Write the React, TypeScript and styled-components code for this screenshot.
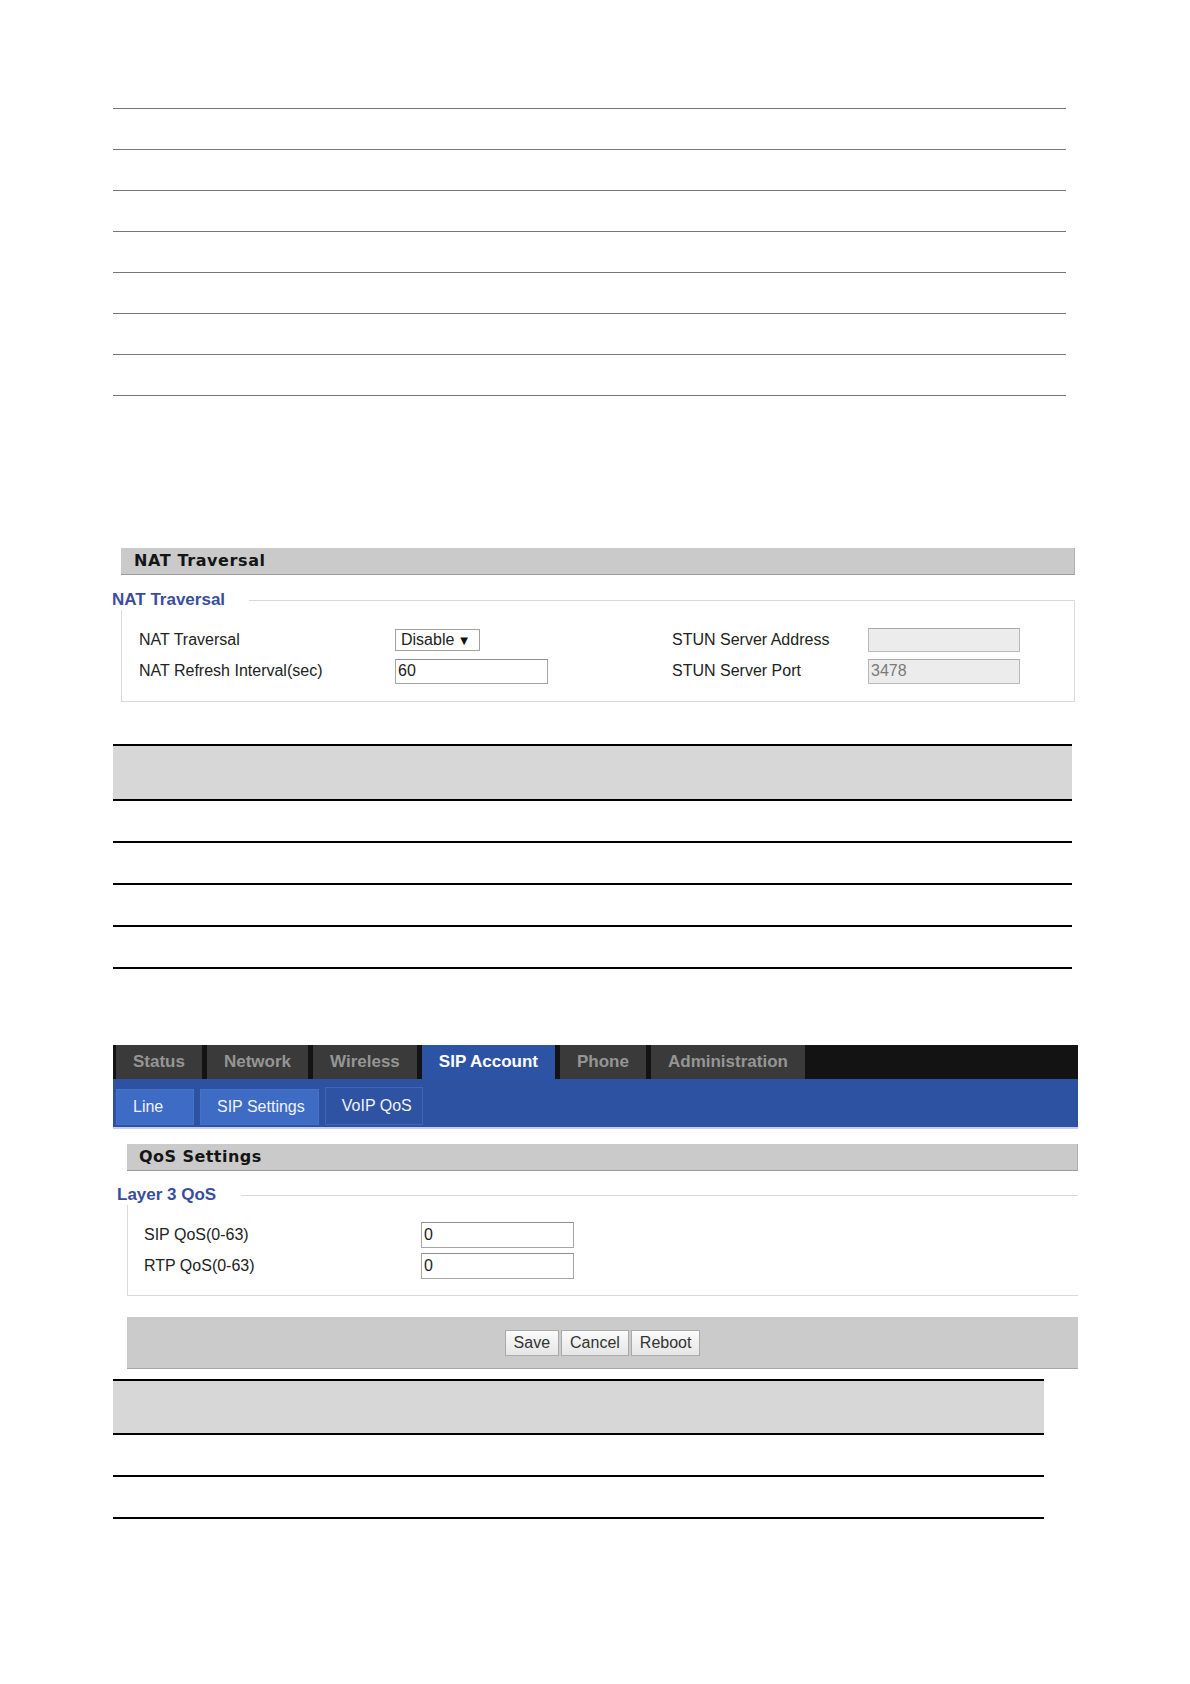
import React from "react";
import styled, { createGlobalStyle } from "styled-components";

const GlobalStyle = createGlobalStyle`
  html, body { margin: 0; padding: 0; background: #ffffff; }
  body { font-family: "Liberation Sans", Arial, sans-serif; color: #222; }
  * { box-sizing: border-box; }
`;

const Page = styled.div`
  width: 1190px;
  min-height: 1684px;
  padding: 108px 0 0 113px;
  display: flex;
  flex-direction: column;
`;

const RuleList = styled.div`
  display: flex;
  flex-direction: column;
  gap: 40px;
`;

const Rule = styled.div`
  width: 953px;
  height: 1px;
  background: #767676;
`;

const SectionHeader = styled.div<{ $mt: number; $ml: number; $w: number; $size: number; $pl: number; $ls: number }>`
  margin-top: ${(p) => p.$mt}px;
  margin-left: ${(p) => p.$ml}px;
  width: ${(p) => p.$w}px;
  height: 27px;
  padding-left: ${(p) => p.$pl}px;
  background: #cacaca;
  border-bottom: 1px solid #9c9c9c;
  border-right: 1px solid #b0b0b0;
  font-family: "DejaVu Sans", Verdana, sans-serif;
  font-weight: bold;
  font-size: ${(p) => p.$size}px;
  letter-spacing: ${(p) => p.$ls}px;
  line-height: 26px;
  color: #151515;
`;

const Group = styled.div<{ $mt: number; $ml: number; $w: number }>`
  margin-top: ${(p) => p.$mt}px;
  margin-left: ${(p) => p.$ml}px;
  width: ${(p) => p.$w}px;
  display: flex;
  flex-direction: column;
`;

const TitleRow = styled.div<{ $shift: number; $gap: number }>`
  height: 20px;
  display: flex;
  align-items: center;
  gap: ${(p) => p.$gap}px;
  margin-left: -${(p) => p.$shift}px;
`;

const Legend = styled.span`
  font-family: "Liberation Sans", Arial, sans-serif;
  font-weight: bold;
  font-size: 17px;
  color: #3a4d9d;
  white-space: nowrap;
`;

const TitleLine = styled.div<{ $open?: boolean }>`
  flex: 1;
  align-self: flex-end;
  height: 10px;
  border-top: 1px solid #d9d9d9;
  border-right: ${(p) => (p.$open ? "none" : "1px solid #dadada")};
`;

const GroupBody = styled.div<{ $cols: string; $pl: number; $open?: boolean }>`
  border: 1px solid #dadada;
  border-top: none;
  ${(p) => (p.$open ? "border-right: none;" : "")}
  padding: 14.5px 0 14px ${(p) => p.$pl}px;
  display: grid;
  grid-template-columns: ${(p) => p.$cols};
  grid-auto-rows: 31px;
  align-items: center;
`;

const Label = styled.span`
  font-size: 16px;
  color: #222;
  white-space: nowrap;
`;

const TextBox = styled.input<{ $w: number; $h: number; $disabled?: boolean }>`
  width: ${(p) => p.$w}px;
  height: ${(p) => p.$h}px;
  padding: 0 2px;
  margin: 0;
  border: 1px solid ${(p) => (p.$disabled ? "#b9b9b9" : "#a6a6a6")};
  border-top-color: ${(p) => (p.$disabled ? "#a9a9a9" : "#8f8f8f")};
  background: ${(p) => (p.$disabled ? "#ececec" : "#ffffff")};
  color: ${(p) => (p.$disabled ? "#7a7a7a" : "#222")};
  font-family: "Liberation Sans", Arial, sans-serif;
  font-size: 16px;
  outline: none;
`;

const SelectBox = styled.div`
  width: 85px;
  height: 22px;
  border: 1px solid #a0a0a0;
  background: #fff;
  display: flex;
  align-items: center;
  gap: 6px;
  padding-left: 5px;
  font-size: 16px;
  color: #222;
`;

const Caret = styled.span`
  font-family: "DejaVu Sans", sans-serif;
  font-size: 10px;
  color: #111;
`;

const DataBlock = styled.div<{ $mt: number; $w: number }>`
  margin-top: ${(p) => p.$mt}px;
  width: ${(p) => p.$w}px;
  border-top: 2px solid #000;
  display: flex;
  flex-direction: column;
`;

const DataHead = styled.div<{ $h: number }>`
  height: ${(p) => p.$h + 2}px;
  background: #d7d7d7;
  border-bottom: 2px solid #000;
`;

const DataRow = styled.div`
  height: 42px;
  border-bottom: 2px solid #000;
`;

const NavBar = styled.div`
  margin-top: 76px;
  width: 965px;
  height: 34px;
  background: #131313;
  display: flex;
  gap: 5px;
  padding-left: 3px;
`;

const NavTab = styled.div<{ $active?: boolean }>`
  height: 34px;
  padding: 0 17px;
  display: flex;
  align-items: center;
  background: ${(p) => (p.$active ? "#2d54a4" : "#3a3a3a")};
  color: ${(p) => (p.$active ? "#ffffff" : "#959595")};
  font-family: "Liberation Sans", Arial, sans-serif;
  font-weight: bold;
  font-size: 17px;
  white-space: nowrap;
`;

const SubBar = styled.div`
  width: 965px;
  height: 50px;
  background: #2e52a2;
  border-bottom: 2px solid #c9cdeb;
  display: flex;
  align-items: flex-end;
  gap: 6px;
  padding: 0 0 2px 3px;
`;

const SubTab = styled.div<{ $light?: boolean; $min?: number }>`
  height: ${(p) => (p.$light ? 36 : 38)}px;
  min-width: ${(p) => p.$min ?? 0}px;
  padding: 0 ${(p) => (p.$light ? 13 : 10)}px 0 16px;
  display: flex;
  align-items: center;
  background: ${(p) => (p.$light ? "#3e6bc4" : "#2f53a3")};
  border: 1px solid ${(p) => (p.$light ? "#4673c9" : "#4266b6")};
  color: #eef2fc;
  font-size: 16px;
  white-space: nowrap;
`;

const ButtonBar = styled.div`
  margin-top: 21px;
  margin-left: 14px;
  width: 951px;
  height: 52px;
  background: #cbcbcb;
  border-bottom: 1px solid #a8a8a8;
  display: flex;
  justify-content: center;
  align-items: flex-start;
  gap: 2px;
  padding-top: 12.5px;
`;

const Button = styled.button`
  height: 26px;
  padding: 0 8px;
  margin: 0;
  border: 1px solid #a9a9a9;
  background: linear-gradient(#fbfbfb, #e5e5e5);
  color: #333;
  font-family: "Liberation Sans", Arial, sans-serif;
  font-size: 16px;
  line-height: 24px;
`;

const tabs = ["Status", "Network", "Wireless", "SIP Account", "Phone", "Administration"];

export default function App() {
  return (
    <>
      <GlobalStyle />
      <Page>
        <RuleList>
          {Array.from({ length: 8 }).map((_, i) => (
            <Rule key={i} />
          ))}
        </RuleList>

        <SectionHeader $mt={152} $ml={8} $w={954} $size={16} $pl={13} $ls={0.6}>
          NAT Traversal
        </SectionHeader>
        <Group $mt={15} $ml={8} $w={954}>
          <TitleRow $shift={9} $gap={24}>
            <Legend>NAT Traversal</Legend>
            <TitleLine />
          </TitleRow>
          <GroupBody $cols="256px 277px 196px 1fr" $pl={17}>
            <Label>NAT Traversal</Label>
            <SelectBox>
              Disable<Caret>▼</Caret>
            </SelectBox>
            <Label>STUN Server Address</Label>
            <TextBox $w={152} $h={24} $disabled readOnly value="" />
            <Label>NAT Refresh Interval(sec)</Label>
            <TextBox $w={153} $h={25} readOnly value="60" />
            <Label>STUN Server Port</Label>
            <TextBox $w={152} $h={25} $disabled readOnly value="3478" />
          </GroupBody>
        </Group>

        <DataBlock $mt={42} $w={959}>
          <DataHead $h={53} />
          {Array.from({ length: 4 }).map((_, i) => (
            <DataRow key={i} />
          ))}
        </DataBlock>

        <NavBar>
          {tabs.map((t) => (
            <NavTab key={t} $active={t === "SIP Account"}>
              {t}
            </NavTab>
          ))}
        </NavBar>
        <SubBar>
          <SubTab $light $min={78}>Line</SubTab>
          <SubTab $light>SIP Settings</SubTab>
          <SubTab>VoIP QoS</SubTab>
        </SubBar>

        <SectionHeader $mt={15} $ml={14} $w={951} $size={16} $pl={12} $ls={0.45}>
          QoS Settings
        </SectionHeader>
        <Group $mt={14} $ml={14} $w={951}>
          <TitleRow $shift={10} $gap={25}>
            <Legend>Layer 3 QoS</Legend>
            <TitleLine $open />
          </TitleRow>
          <GroupBody $cols="277px 1fr" $pl={16} $open>
            <Label>SIP QoS(0-63)</Label>
            <TextBox $w={153} $h={26} readOnly value="0" />
            <Label>RTP QoS(0-63)</Label>
            <TextBox $w={153} $h={26} readOnly value="0" />
          </GroupBody>
        </Group>

        <ButtonBar>
          <Button>Save</Button>
          <Button>Cancel</Button>
          <Button>Reboot</Button>
        </ButtonBar>

        <DataBlock $mt={10} $w={931}>
          <DataHead $h={52} />
          {Array.from({ length: 2 }).map((_, i) => (
            <DataRow key={i} />
          ))}
        </DataBlock>
      </Page>
    </>
  );
}
